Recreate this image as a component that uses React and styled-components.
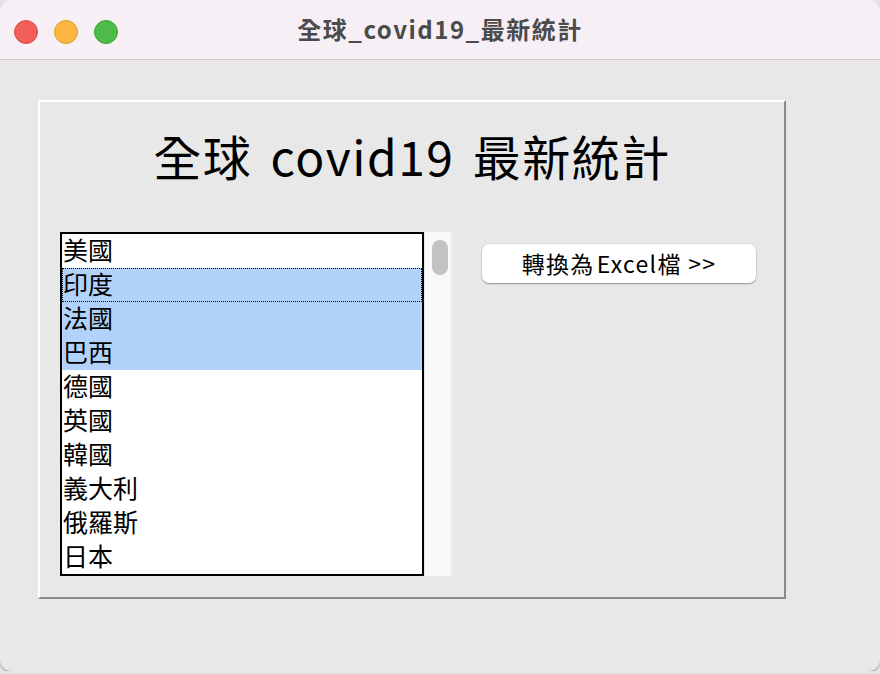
import React from "react";
import styled, { createGlobalStyle } from "styled-components";

const countries = ["美國", "印度", "法國", "巴西", "德國", "英國", "韓國", "義大利", "俄羅斯", "日本"];
const selected = [1, 2, 3];
const focused = 1;

const GlobalStyle = createGlobalStyle`
  html, body {
    margin: 0;
    padding: 0;
    background: #e4e4e4;
  }
  body {
    font-family: "Noto Sans CJK TC", "Noto Sans", sans-serif;
  }
`;

const Window = styled.div`
  width: 880px;
  height: 671px;
  background: #e8e8e8;
  border-radius: 11px;
  overflow: hidden;
  box-shadow: 0 1px 2px rgba(0, 0, 0, 0.35);
  display: flex;
  flex-direction: column;
`;

const TitleBar = styled.div`
  height: 60px;
  flex-shrink: 0;
  box-sizing: border-box;
  background: #f6eff5;
  border-bottom: 1px solid #c9c6c9;
  position: relative;
  display: flex;
  align-items: center;
  justify-content: center;
`;

const Lights = styled.div`
  position: absolute;
  left: 14px;
  top: 20px;
  display: flex;
  gap: 16px;
`;

const Light = styled.span`
  width: 24px;
  height: 24px;
  box-sizing: border-box;
  border-radius: 50%;
  background: ${(p) => p.$color};
  border: 1px solid ${(p) => p.$edge};
`;

const WindowTitle = styled.div`
  font-size: 24px;
  font-weight: 700;
  letter-spacing: 1.5px;
  color: #4b4b4b;
  margin-top: -2px;
`;

const Content = styled.div`
  padding: 40px 0 0 38px;
`;

const Frame = styled.div`
  width: 748px;
  height: 499px;
  box-sizing: border-box;
  border-top: 2px solid #ffffff;
  border-left: 2px solid #ffffff;
  border-right: 2px solid #8a8a8a;
  border-bottom: 2px solid #8a8a8a;
  display: flex;
  flex-direction: column;
`;

const Heading = styled.h1`
  margin: 0;
  height: 130px;
  display: flex;
  align-items: center;
  justify-content: center;
  font-size: 48px;
  font-weight: 400;
  letter-spacing: 1.5px;
  word-spacing: 6px;
  color: #000;
  padding-bottom: 24px;
  box-sizing: border-box;
`;

const Row = styled.div`
  display: flex;
  align-items: flex-start;
  padding-left: 20px;
`;

const ListBox = styled.div`
  width: 364px;
  height: 344px;
  box-sizing: border-box;
  border: 2px solid #000;
  background: #fff;
  display: flex;
  flex-direction: column;
`;

const Item = styled.div`
  height: 34px;
  line-height: 31px;
  font-size: 25px;
  color: #000;
  padding-left: 1px;
  box-sizing: border-box;
  background: ${(p) => (p.$selected ? "#b0d2fb" : "transparent")};
  outline: ${(p) => (p.$focused ? "1px dotted #000" : "none")};
  outline-offset: -1px;
`;

const Scrollbar = styled.div`
  width: 28px;
  height: 344px;
  box-sizing: border-box;
  background: #f8f8f8;
  border-right: 2px solid #ececec;
  margin-left: 1px;
  padding: 8px 0 0 7px;
`;

const Thumb = styled.div`
  width: 16px;
  height: 35px;
  border-radius: 8px;
  background: #c2c2c2;
`;

const Button = styled.button`
  margin: 12px 0 0 29px;
  width: 274px;
  height: 39px;
  border: none;
  border-radius: 7px;
  background: #fff;
  box-shadow: 0 1px 1.5px rgba(0, 0, 0, 0.35), 0 0 0 0.5px rgba(0, 0, 0, 0.08);
  font-family: "Noto Sans CJK TC", "Noto Sans", sans-serif;
  font-size: 23px;
  letter-spacing: 1.3px;
  color: #000;
  padding: 0 0 1px;
  cursor: pointer;
`;

const Gap = styled.span`
  letter-spacing: -3px;
`;

export default function App() {
  return (
    <>
      <GlobalStyle />
      <Window>
        <TitleBar>
          <Lights>
            <Light $color="#f25f58" $edge="#dd4a43" />
            <Light $color="#fbb73f" $edge="#dd9a2c" />
            <Light $color="#4bbd48" $edge="#3aa337" />
          </Lights>
          <WindowTitle>全球_covid19_最新統計</WindowTitle>
        </TitleBar>
        <Content>
          <Frame>
            <Heading>全球 covid19 最新統計</Heading>
            <Row>
              <ListBox>
                {countries.map((c, i) => (
                  <Item key={c} $selected={selected.includes(i)} $focused={i === focused}>
                    {c}
                  </Item>
                ))}
              </ListBox>
              <Scrollbar>
                <Thumb />
              </Scrollbar>
              <Button>
                轉換為<Gap> </Gap>Excel檔 &gt;&gt;
              </Button>
            </Row>
          </Frame>
        </Content>
      </Window>
    </>
  );
}
